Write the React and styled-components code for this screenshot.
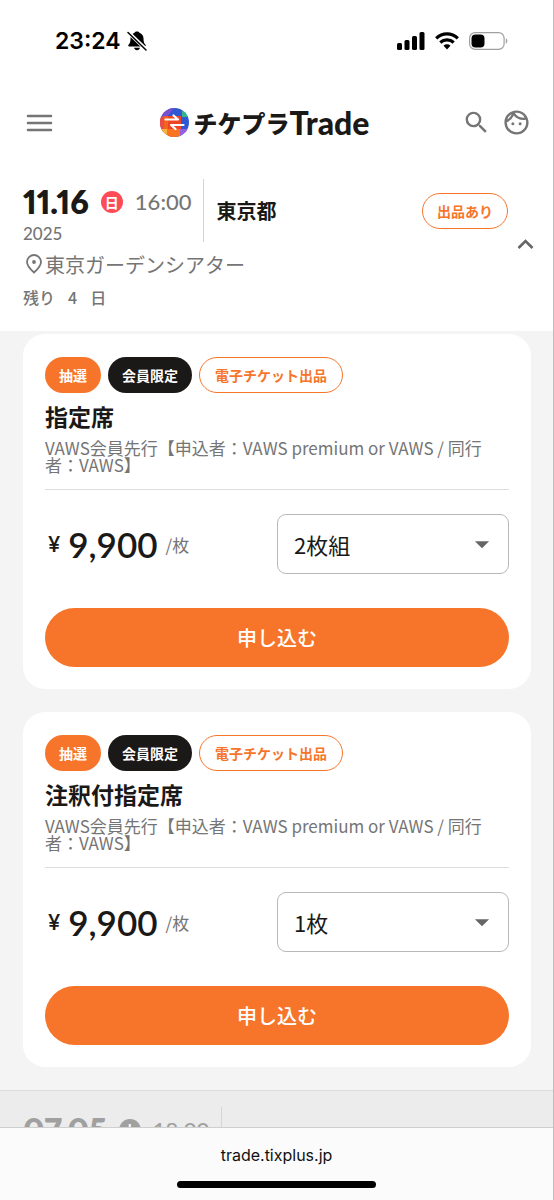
import React, { useState } from "react";
import styled, { createGlobalStyle } from "styled-components";
import { MdSearch, MdOutlineFace, MdArrowDropDown } from "react-icons/md";

const GlobalStyle = createGlobalStyle`
    * {
        box-sizing: border-box;
    }

    body {
        margin: 0;
        background-color: #FFF;
        color: #1B1918;
        font-family: "Noto Sans CJK JP", sans-serif;
    }

    button, select {
        font-family: inherit;
        cursor: pointer;
    }
`;

const Screen = styled.div`
    display: flex;
    flex-direction: column;
    height: 100vh;
    border-right: 1px solid #BEBEBE;
    background-color: #FFF;
`;

const StatusBar = styled.div`
    display: flex;
    justify-content: space-between;
    align-items: center;
    flex-shrink: 0;
    height: 82px;
    padding: 0 45px 0 55px;
`;

const StatusGroup = styled.div`
    display: flex;
    align-items: center;
    gap: ${({ $gap }) => $gap}px;
`;

const Clock = styled.span`
    font: 600 23px/28px Inter, sans-serif;
    color: #000;
`;

const Header = styled.header`
    display: grid;
    grid-template-columns: 60px 1fr 84px;
    align-items: center;
    flex-shrink: 0;
    height: 81px;
    padding: 0 22px;
`;

const HeaderActions = styled.div`
    display: flex;
    justify-content: flex-end;
    gap: 11px;
`;

const IconButton = styled.button`
    display: flex;
    padding: 0;
    border: none;
    background: none;
    color: #757575;
`;

const Logo = styled.a`
    display: flex;
    align-items: center;
    justify-content: center;
    gap: 5px;
    color: #1B1918;
    text-decoration: none;
`;

const LogoText = styled.span`
    display: flex;
    align-items: center;
    font-size: 24px;
    font-weight: 900;
    line-height: 32px;
`;

const LogoLatin = styled.span`
    font-family: Lato, sans-serif;
    font-size: 32px;
`;

const Scroller = styled.main`
    flex: 1;
    min-height: 0;
    overflow: hidden;
`;

const EventBar = styled.section`
    display: flex;
    align-items: center;
    justify-content: space-between;
    padding: 16px 19px 23px 23px;
    background-color: ${({ $past }) => ($past ? "#ECECEC" : "#FFF")};
    border-top: ${({ $past }) => ($past ? "1px solid #DDD" : "none")};
    color: ${({ $past }) => ($past ? "#A0A0A0" : "#1B1918")};
`;

const EventBody = styled.div`
    flex: 1;
`;

const EventTop = styled.div`
    display: flex;
    align-items: center;
    height: 63px;
`;

const DateBlock = styled.div`
    align-self: stretch;
    padding-right: 12px;
    border-right: 1px solid #D5D5D5;
`;

const DateRow = styled.div`
    display: flex;
    align-items: center;
    gap: 12px;
    height: 46px;
`;

const DateText = styled.span`
    font: 800 32px/36px Lato, sans-serif;
    font-variant-numeric: proportional-nums;
`;

const Weekday = styled.span`
    width: 22px;
    height: 22px;
    border-radius: 50%;
    background-color: ${({ $past }) => ($past ? "#A0A0A0" : "#FF4B55")};
    color: #FFF;
    font-size: 14px;
    font-weight: 700;
    line-height: 22px;
    text-align: center;
`;

const Time = styled.span`
    font: 500 22px/28px Lato, sans-serif;
    color: ${({ $past }) => ($past ? "#A0A0A0" : "#757575")};
`;

const Year = styled.div`
    font: 500 17px/17px Lato, sans-serif;
    color: #757575;
`;

const Prefecture = styled.span`
    margin-left: 12px;
    font-size: 20px;
    font-weight: 700;
`;

const Venue = styled.div`
    display: flex;
    align-items: center;
    height: 44px;
    color: #757575;
    font-size: 20px;
`;

const Remaining = styled.div`
    display: flex;
    gap: 13px;
    color: #757575;
    font-size: 16px;
    font-weight: 500;
    line-height: 22px;
`;

const Badge = styled.span`
    display: inline-flex;
    align-items: center;
    height: 36px;
    padding: 0 14px;
    border-radius: 18px;
    background-color: ${({ $fill }) => $fill};
    color: #FFF;
    font-size: 14px;
    font-weight: 700;
`;

const OutlineBadge = styled(Badge)`
    padding: 0 15px;
    border: 1px solid #F7752A;
    background-color: #FFF;
    color: #F7752A;
`;

const EventBadge = styled(OutlineBadge)`
    padding: 0 14px;
    margin-left: auto;
    margin-right: 9px;
`;

const TicketList = styled.div`
    display: flex;
    flex-direction: column;
    gap: 23px;
    padding: 3px 22px 23px 23px;
    background-color: #F4F4F4;
`;

const Card = styled.article`
    padding: 23px 22px 22px;
    border-radius: 22px;
    background-color: #FFF;
`;

const Badges = styled.div`
    display: flex;
    gap: 7px;
`;

const Title = styled.h2`
    margin: 7px 0;
    font-size: 23px;
    font-weight: 700;
    line-height: 32px;
`;

const Description = styled.p`
    margin: 0;
    padding-bottom: 16px;
    border-bottom: 1px solid #DDD;
    color: #757575;
    font-size: 17px;
    line-height: 17px;
`;

const PriceRow = styled.div`
    display: flex;
    align-items: center;
    justify-content: space-between;
    margin: 24px 0 34px;
`;

const Price = styled.div`
    display: flex;
    align-items: center;
    gap: 8px;
    padding-left: 3px;
`;

const Yen = styled.span`
    font: 500 22px/32px Inter, sans-serif;
`;

const Amount = styled.span`
    font: 600 35px/40px Lato, sans-serif;
`;

const Unit = styled.span`
    color: #757575;
    font-size: 17px;
`;

const SelectArea = styled.div`
    position: relative;
    width: 50%;
    color: #666;

    svg {
        position: absolute;
        top: 13px;
        right: 10px;
        pointer-events: none;
    }
`;

const Select = styled.select`
    display: block;
    width: 100%;
    height: 60px;
    padding: 0 16px;
    border: 1px solid #B8B8B8;
    border-radius: 9px;
    background-color: #FFF;
    color: #1B1918;
    font-size: 22px;
    appearance: none;
`;

const ApplyButton = styled.button`
    display: block;
    width: 100%;
    height: 59px;
    padding: 0;
    border: none;
    border-radius: 30px;
    background-color: #F7752A;
    color: #FFF;
    font-size: 20px;
    font-weight: 500;
`;

const BrowserBar = styled.footer`
    display: flex;
    flex-direction: column;
    align-items: center;
    justify-content: space-between;
    flex-shrink: 0;
    height: 73px;
    padding: 17px 0 12px;
    border-top: 1px solid #CFCFCF;
    background-color: #FBFBFB;
`;

const Url = styled.span`
    font: 400 16px/20px Inter, sans-serif;
    color: #111;
`;

const HomeIndicator = styled.div`
    width: 36%;
    height: 7px;
    border-radius: 4px;
    background-color: #000;
`;

const BellOff = () => (
    <svg width="20" height="20" viewBox="0 0 20 20">
        <path d="M10 0.5c1.200 0 2.100.5 2.500 1.200 2.500.9 4 3 4 5.800 0 3.500.7 4.800 2 6.300.5.7.3 1.700-.7 1.700H2.200c-1 0-1.200-1-.7-1.700 1.300-1.500 2-2.800 2-6.300 0-2.800 1.500-4.900 4-5.800C7.900 1 8.800.5 10 .5z" fill="#000" />
        <path d="M7 16.800h6c-.4 1.600-1.500 2.500-3 2.500s-2.600-.9-3-2.500z" fill="#000" />
        <path d="M1.500 1.500l17.500 17" stroke="#FFF" strokeWidth="3.800" />
        <path d="M1 1.500l18 17.500" stroke="#000" strokeWidth="1.500" strokeLinecap="round" />
    </svg>
);

const Signal = () => (
    <svg width="28" height="18" viewBox="0 0 28 18">
        <rect x="0" y="11" width="5" height="7" rx="1.500" />
        <rect x="7.500" y="8" width="5" height="10" rx="1.500" />
        <rect x="15" y="4" width="5" height="14" rx="1.500" />
        <rect x="22.500" y="0" width="5" height="18" rx="1.500" />
    </svg>
);

const Wifi = () => (
    <svg width="24" height="18" viewBox="0 0 24 18" fill="none" stroke="#000" strokeWidth="3.200">
        <path d="M1.200 6.300a15.600 15.600 0 0 1 21.600 0" />
        <path d="M5.300 10.500a9.800 9.800 0 0 1 13.400 0" />
        <path d="M12 17.500l-3.500-3.700a5 5 0 0 1 7 0z" fill="#000" stroke="none" />
    </svg>
);

const Battery = () => (
    <svg width="39" height="18" viewBox="0 0 39 18">
        <rect x="0.600" y="0.600" width="34.500" height="16.800" rx="5.500" fill="none" stroke="#A0A0A0" strokeWidth="1.200" />
        <rect x="2.500" y="2.500" width="13" height="13" rx="4" fill="#000" />
        <path d="M36.800 6.300c2 .8 2 4.600 0 5.400z" fill="#A0A0A0" />
    </svg>
);

const MenuIcon = () => (
    <svg width="34" height="34" viewBox="0 0 34 34" fill="none" stroke="#757575" strokeWidth="2.600" strokeLinecap="round">
        <path d="M6 10h23M6 17h23M6 24h23" />
    </svg>
);

const LogoMark = () => (
    <svg width="29" height="29" viewBox="0 0 29 29">
        <defs>
            <clipPath id="mark">
                <circle cx="14.500" cy="14.500" r="14.500" />
            </clipPath>
        </defs>
        <g clipPath="url(#mark)">
            <rect width="29" height="29" fill="#3158D3" />
            <path d="M0 0h14L7 9H0z" fill="#7A4FD0" />
            <path d="M22 3l7-3v9h-7z" fill="#35B58E" />
            <path d="M0 9l7-1h14v13h-7v8H0z" fill="#F4641E" />
            <path d="M0 9h4v12H0z" fill="#EB4C4B" />
            <path d="M8 8h13v13H8z" fill="#EE4523" />
            <path d="M7 21h13v8H7z" fill="#FA7421" />
            <path d="M0 21h7v8H0z" fill="#F7B53B" />
            <path d="M20 21h9v8h-9z" fill="#9A5FE0" />
        </g>
        <path d="M5.500 11.500h12.500l-4.500-4M23.500 17H11l4.500 4" fill="none" stroke="#FFF" strokeWidth="2.200" strokeLinejoin="round" strokeLinecap="round" />
    </svg>
);

const Pin = () => (
    <svg width="22" height="22" viewBox="0 0 22 22" fill="none" stroke="#757575" strokeWidth="1.800">
        <path d="M11 19.500C7 16 4 12.500 4 9a7 7 0 0 1 14 0c0 3.500-3 7-7 10.500z" />
        <circle cx="11" cy="9" r="1.900" fill="#757575" stroke="none" />
    </svg>
);

const Caret = () => (
    <svg width="17" height="12" viewBox="0 0 17 12" fill="none" stroke="#666" strokeWidth="2.600">
        <path d="M1.500 10l7-7 7 7" />
    </svg>
);

const tickets = [
    { id: "reserved", title: "指定席", price: "9,900", quantity: "2枚組" },
    { id: "annotated", title: "注釈付指定席", price: "9,900", quantity: "1枚" },
];

const Ticket = ({ id, title, price, quantity }) => (
    <Card>
        <Badges>
            <Badge $fill="#F7752A">抽選</Badge>
            <Badge $fill="#1B1918">会員限定</Badge>
            <OutlineBadge>電子チケット出品</OutlineBadge>
        </Badges>
        <Title>{title}</Title>
        <Description>
            VAWS会員先行【申込者：VAWS premium or VAWS / 同行者：VAWS】
        </Description>
        <PriceRow>
            <Price>
                <Yen>¥</Yen>
                <Amount>{price}</Amount>
                <Unit>/枚</Unit>
            </Price>
            <SelectArea>
                <Select id={id} aria-label="枚数" defaultValue={quantity}>
                    <option>{quantity}</option>
                </Select>
                <MdArrowDropDown size={34} />
            </SelectArea>
        </PriceRow>
        <ApplyButton type="button">申し込む</ApplyButton>
    </Card>
);

const EventDate = ({ date, weekday, time, year, past }) => (
    <DateBlock>
        <DateRow>
            <DateText>{date}</DateText>
            <Weekday $past={past}>{weekday}</Weekday>
            <Time $past={past}>{time}</Time>
        </DateRow>
        {year && <Year>{year}</Year>}
    </DateBlock>
);

const App = () => {
    const [open, setOpen] = useState(true);

    return (
        <Screen>
            <GlobalStyle />
            <StatusBar>
                <StatusGroup $gap={6}>
                    <Clock>23:24</Clock>
                    <BellOff />
                </StatusGroup>
                <StatusGroup $gap={10}>
                    <Signal />
                    <Wifi />
                    <Battery />
                </StatusGroup>
            </StatusBar>
            <Header>
                <IconButton type="button" aria-label="メニュー">
                    <MenuIcon />
                </IconButton>
                <Logo href="#">
                    <LogoMark />
                    <LogoText>
                        チケプラ<LogoLatin>Trade</LogoLatin>
                    </LogoText>
                </Logo>
                <HeaderActions>
                    <IconButton type="button" aria-label="検索">
                        <MdSearch size={29} />
                    </IconButton>
                    <IconButton type="button" aria-label="マイページ">
                        <MdOutlineFace size={29} />
                    </IconButton>
                </HeaderActions>
            </Header>
            <Scroller>
                <EventBar>
                    <EventBody>
                        <EventTop>
                            <EventDate date="11.16" weekday="日" time="16:00" year="2025" />
                            <Prefecture>東京都</Prefecture>
                            <EventBadge>出品あり</EventBadge>
                        </EventTop>
                        <Venue>
                            <Pin />
                            東京ガーデンシアター
                        </Venue>
                        <Remaining>
                            <span>残り</span>
                            <span>4</span>
                            <span>日</span>
                        </Remaining>
                    </EventBody>
                    <IconButton type="button" aria-label="開閉" onClick={() => setOpen(!open)}>
                        <Caret />
                    </IconButton>
                </EventBar>
                {open && (
                    <TicketList>
                        {tickets.map((item) => (
                            <Ticket key={item.id} {...item} />
                        ))}
                    </TicketList>
                )}
                <EventBar $past>
                    <EventTop>
                        <EventDate date="07.05" weekday="土" time="18:00" past />
                    </EventTop>
                </EventBar>
            </Scroller>
            <BrowserBar>
                <Url>trade.tixplus.jp</Url>
                <HomeIndicator />
            </BrowserBar>
        </Screen>
    );
};

export default App;
